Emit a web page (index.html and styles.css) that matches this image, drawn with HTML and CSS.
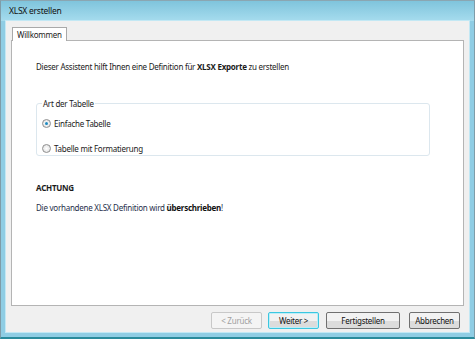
FILE: index.html
```
<!DOCTYPE html>
<html lang="de">
<head>
    <meta charset="UTF-8">
    <title>XLSX erstellen</title>
    <link rel="stylesheet" href="styles.css">
</head>
<body>
    <div class="window">
        <div class="titlebar">XLSX erstellen</div>
        <div class="client">
            <div class="tabs">
                <div class="tab active">Willkommen</div>
            </div>
            <div class="panel">
                <p class="intro">Dieser Assistent hilft Ihnen eine Definition für <b>XLSX Exporte</b> zu erstellen</p>

                <fieldset class="group">
                    <legend>Art der Tabelle</legend>
                    <label class="option">
                        <span class="radio checked"></span>
                        Einfache Tabelle
                    </label>
                    <label class="option">
                        <span class="radio"></span>
                        Tabelle mit Formatierung
                    </label>
                </fieldset>

                <div class="warning-title">ACHTUNG</div>
                <p class="warning">Die vorhandene XLSX Definition wird <b>überschrieben</b>!</p>
            </div>
            <div class="buttons">
                <button class="btn" disabled>&lt; Zurück</button>
                <button class="btn default">Weiter &gt;</button>
                <button class="btn wide">Fertigstellen</button>
                <button class="btn">Abbrechen</button>
            </div>
        </div>
    </div>
</body>
</html>
```

FILE: styles.css
```
body {
    margin: 0;
    width: 475px;
    height: 339px;
    overflow: hidden;
    font-family: 'Noto Sans', sans-serif;
    font-size: 8px;
    letter-spacing: -0.25px;
    color: #1b1b1b;
}

.window {
    height: 339px;
    box-sizing: border-box;
    display: flex;
    flex-direction: column;
    background: #8fcde4;
    border-top: 1px solid #8aa6b2;
    border-left: 1px solid #7f9ca8;
    border-right: 1px solid #7f9ca8;
    border-bottom: 2px solid #2a8b9c;
    padding: 0 5px 5px 5px;
}

.titlebar {
    height: 20px;
    margin: 0 -5px;
    padding-left: 8px;
    line-height: 20px;
    font-size: 8.5px;
    color: #111;
    background: linear-gradient(#7fc4dc, #a6dcee);
}

.client {
    flex: 1;
    display: flex;
    flex-direction: column;
    background: #f0f0f0;
    padding: 5px 5px 0 5px;
    box-shadow: 0 0 0 1px #c3e8f4;
}

.tabs {
    display: flex;
    height: 14px;
    padding-left: 1px;
}

.tab {
    padding: 0 4px;
    line-height: 13px;
    background: #fff;
    border: 1px solid #a9a9a9;
    border-bottom: none;
    position: relative;
    top: 1px;
}

.panel {
    height: 264px;
    background: #fff;
    border: 1px solid #b4b4b4;
    padding: 0 33px 0 24px;
}

.intro {
    margin: 20px 0 0 0;
}

.group {
    margin: 26px 0 0 0;
    padding: 9px 5px 5px 5px;
    border: 1px solid #dce7ee;
    border-radius: 3px;
    height: 42px;
}

.group legend {
    padding: 0 1px;
    margin-left: 0;
}

.option {
    display: flex;
    align-items: center;
    gap: 3px;
    height: 11px;
    margin-bottom: 14px;
}

.radio {
    width: 9px;
    height: 9px;
    box-sizing: border-box;
    border-radius: 50%;
    border: 1px solid #8f8f8f;
    background: radial-gradient(#ffffff, #dcdcdc);
    position: relative;
}

.radio.checked::after {
    content: '';
    position: absolute;
    left: 2px;
    top: 2px;
    width: 3px;
    height: 3px;
    border-radius: 50%;
    background: #1f8ac0;
}

.warning-title {
    margin-top: 26px;
    font-weight: bold;
}

.warning {
    margin: 9px 0 0 0;
    color: #1f2f4a;
}

.warning b {
    color: #111;
}

.buttons {
    display: flex;
    justify-content: flex-end;
    gap: 6px;
    padding: 6px 4px 0 0;
}

.btn {
    font-family: inherit;
    font-size: 8px;
    letter-spacing: -0.25px;
    color: #111;
    width: 51px;
    height: 17px;
    padding: 0;
    border: 1px solid #707070;
    border-radius: 2px;
    background: linear-gradient(#f2f2f2 50%, #dcdcdc 50%);
}

.btn.wide {
    width: 74px;
    margin-left: 1px;
    margin-right: 3px;
}

.btn.default {
    border-color: #3cc7e0;
    box-shadow: inset 0 0 0 1px #bdeef8;
}

.btn:disabled {
    color: #a0a0a0;
    border-color: #c8c8c8;
    background: #f4f4f4;
}
```
